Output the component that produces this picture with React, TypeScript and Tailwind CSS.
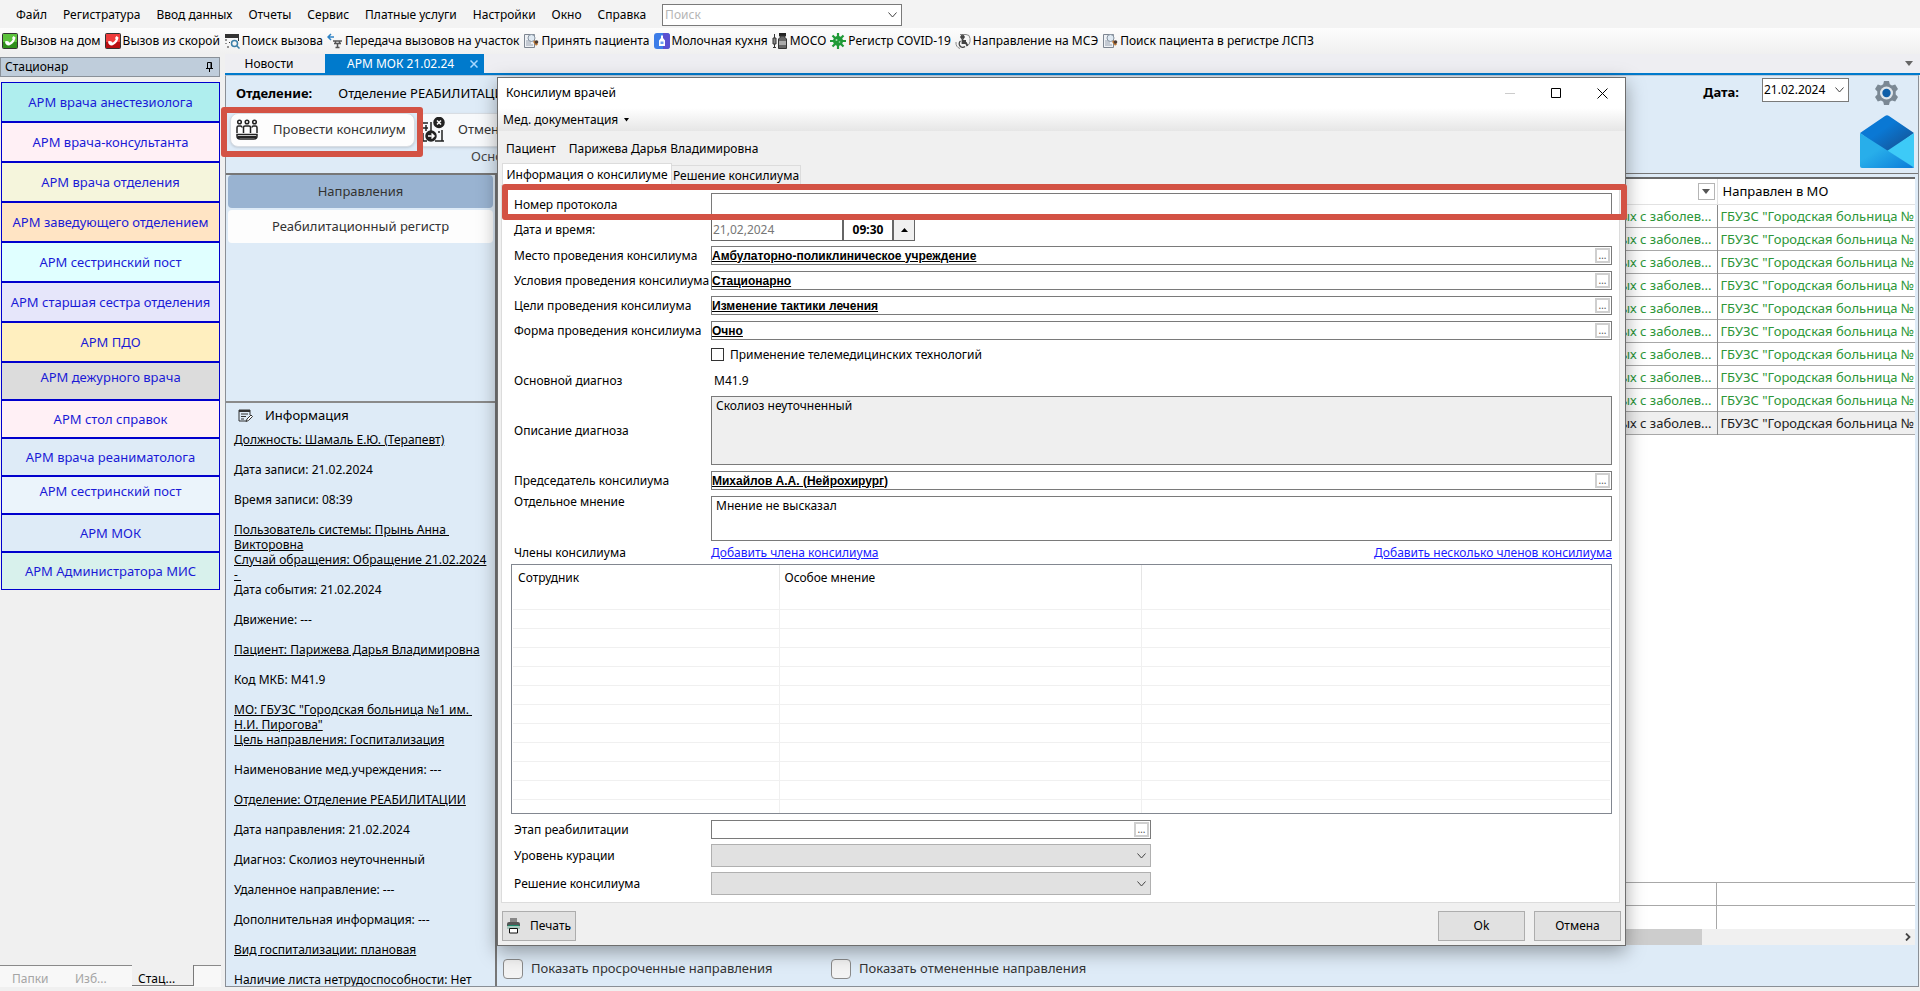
import {ReactNode, useState} from "react";

const menuItems = ["Файл", "Регистратура", "Ввод данных", "Отчеты", "Сервис", "Платные услуги", "Настройки", "Окно", "Справка"];

const PhoneIcon = ({top, bottom}: {top: string; bottom: string}) => (
    <svg width="16" height="16" viewBox="0 0 16 16" className="shrink-0">
        <rect x="0.5" y="0.5" width="15" height="15" rx="1" fill={top} stroke="#333"/>
        <path d="M1 9h14v6H1z" fill={bottom}/>
        <path d="M3 8.500c0 2.500 2 4 3.500 4 3.500-.5 6.500-4 7-8L11.500 3 10 5l.8 1.200C10 7.800 9 8.900 7.500 9.500L6.200 8.300 4.300 8z" fill="#fff"/>
    </svg>
);

const SearchCallIcon = () => (
    <svg width="16" height="16" viewBox="0 0 16 16" fill="none" stroke="#333" className="shrink-0">
        <path d="M1 2h14M1 4h14" strokeWidth="2"/>
        <path d="M2 6v2M2 10v1M5 9l1 1M3 14h2M14.500 5v3"/>
        <circle cx="10.500" cy="10.500" r="3" stroke="#3b7fa8" strokeWidth="1.500"/>
        <path d="M13 13l2.500 2.500" stroke="#3b7fa8" strokeWidth="1.500"/>
    </svg>
);

const TransferIcon = () => (
    <svg width="16" height="16" viewBox="0 0 16 16" fill="none" className="shrink-0">
        <path d="M1 4h6M4 1L1 4l3 3" stroke="#2f83c5" strokeWidth="1.500"/>
        <path d="M6 8h9M7 10.500h7M8.500 8v3M12.500 8v3M10.500 11v3.500M8.500 14.500h4" stroke="#555" strokeWidth="1.500"/>
    </svg>
);

const PatientIcon = () => (
    <svg width="16" height="16" viewBox="0 0 16 16" fill="none" className="shrink-0">
        <path d="M1.500 1.500h10v13h-10z" fill="#eef1f5" stroke="#7d8590"/>
        <path d="M3 8h5M3 10h5M3 12h7" stroke="#9aa3b0"/>
        <circle cx="8.500" cy="5" r="3.500" fill="#dfe9f2" stroke="#8793a0"/>
        <path d="M11 8l3 4" stroke="#c0762c" strokeWidth="2.500"/>
        <circle cx="13.500" cy="9" r="1.800" fill="#4a3b35"/>
    </svg>
);

const MilkIcon = () => (
    <svg width="16" height="16" viewBox="0 0 16 16" className="shrink-0">
        <rect width="16" height="16" rx="3" fill="#3d7de8"/>
        <path d="M9 0h4a3 3 0 013 3v10a3 3 0 01-3 3H9z" fill="#5a50d0"/>
        <path d="M7 2.500h2V5l2 2.500V13H5V7.500L7 5z" fill="#fff"/>
        <path d="M6.500 8.500h3v2.500h-3z" fill="#6f9cf0"/>
    </svg>
);

const VaccineIcon = () => (
    <svg width="16" height="16" viewBox="0 0 16 16" className="shrink-0">
        <path d="M2.500 1v4M1 5h3v6H1zM2.500 11v4M1 14.500h3" fill="#888" stroke="#333"/>
        <path d="M7 0h7v3H7z" fill="#222"/>
        <path d="M8 3h5v1.500l1.500 1.500v9.500h-8V6L8 4.500z" fill="#666" stroke="#333"/>
        <path d="M7 8h7v4H7z" fill="#aaa"/>
    </svg>
);

const VirusIcon = () => (
    <svg width="16" height="16" viewBox="0 0 16 16" className="shrink-0">
        <path d="M8 0v16M0 8h16M2.500 2.500l11 11M13.500 2.500l-11 11" stroke="#1f9a37" strokeWidth="2.200"/>
        <circle cx="8" cy="8" r="5" fill="#1f9a37"/>
        <circle cx="6.500" cy="7" r="1" fill="#a8dfb2"/>
        <circle cx="9.500" cy="9" r="0.800" fill="#a8dfb2"/>
    </svg>
);

const WheelchairIcon = () => (
    <svg width="16" height="16" viewBox="0 0 16 16" fill="none" stroke="#444" className="shrink-0">
        <path d="M5 1.500h6q4 0 4 4v3q0 3.500-3.500 4" stroke="#888"/>
        <circle cx="7.500" cy="4" r="1.800" fill="#444"/>
        <path d="M7.500 6v4h3.500l1.500 3M8 8h3" strokeWidth="1.800"/>
        <path d="M5.500 8a3.500 3.500 0 104.500 5.500" strokeWidth="1.300"/>
        <path d="M1 9q-.5 5 4 6.500" stroke="#888"/>
    </svg>
);

const toolbarItems: {icon: ReactNode; label: string}[] = [
    {icon: <PhoneIcon top="#5cc23c" bottom="#2f8f1c"/>, label: "Вызов на дом"},
    {icon: <PhoneIcon top="#ee3b3b" bottom="#b90f12"/>, label: "Вызов из скорой"},
    {icon: <SearchCallIcon/>, label: "Поиск вызова"},
    {icon: <TransferIcon/>, label: "Передача вызовов на участок"},
    {icon: <PatientIcon/>, label: "Принять пациента"},
    {icon: <MilkIcon/>, label: "Молочная кухня"},
    {icon: <VaccineIcon/>, label: "МОСО"},
    {icon: <VirusIcon/>, label: "Регистр COVID-19"},
    {icon: <WheelchairIcon/>, label: "Направление на МСЭ"},
    {icon: <PatientIcon/>, label: "Поиск пациента в регистре ЛСПЗ"},
];

const workplaces = [
    {label: "АРМ врача анестезиолога", style: "h-10 bg-[#afeeee]"},
    {label: "АРМ врача-консультанта", style: "h-10 bg-[#fff0f5]"},
    {label: "АРМ врача отделения", style: "h-10 bg-[#f5f5dc]"},
    {label: "АРМ заведующего отделением", style: "h-10 bg-[#ffe4c4]"},
    {label: "АРМ сестринский пост", style: "h-10 bg-[#e0ffff]"},
    {label: "АРМ старшая сестра отделения", style: "h-10 bg-[#e6e6fa]"},
    {label: "АРМ ПДО", style: "h-10 bg-[#ffefbf]"},
    {label: "АРМ дежурного врача", style: "h-[38px] pb-2 bg-[#dcdcdc]"},
    {label: "АРМ стол справок", style: "h-[38px] bg-[#fff0f5]"},
    {label: "АРМ врача реаниматолога", style: "h-[38px] bg-[#deebf7]"},
    {label: "АРМ сестринский пост", style: "h-[38px] pb-2 bg-[#ebf4fb]"},
    {label: "АРМ МОК", style: "h-[38px] bg-[#deebf7]"},
    {label: "АРМ Администратора МИС", style: "h-[38px] bg-[#d8f1ec]"},
];

const infoRows = [
    {text: "Должность: Шамаль Е.Ю. (Терапевт)", link: true},
    {text: "Дата записи: 21.02.2024"},
    {text: "Время записи: 08:39"},
    {text: "Пользователь системы: Прынь Анна \nВикторовна", link: true},
    {text: "Случай обращения: Обращение 21.02.2024\n- ", link: true},
    {text: "Дата события: 21.02.2024"},
    {text: "Движение: ---"},
    {text: "Пациент: Парижева Дарья Владимировна", link: true},
    {text: "Код МКБ: M41.9"},
    {text: "МО: ГБУЗС \"Городская больница №1 им. \nН.И. Пирогова\"", link: true},
    {text: "Цель направления: Госпитализация", link: true},
    {text: "Наименование мед.учреждения: ---"},
    {text: "Отделение: Отделение РЕАБИЛИТАЦИИ", link: true},
    {text: "Дата направления: 21.02.2024"},
    {text: "Диагноз: Сколиоз неуточненный"},
    {text: "Удаленное направление: ---"},
    {text: "Дополнительная информация: ---"},
    {text: "Вид госпитализации: плановая", link: true},
    {text: "Наличие листа нетрудоспособности: Нет"},
];

const Chevron = () => (
    <svg width="9" height="6" viewBox="0 0 9 6" fill="none" stroke="#444" className="pointer-events-none absolute right-1 top-1/2 -translate-y-1/2">
        <path d="M0.500 0.500l4 4.500 4-4.500"/>
    </svg>
);

const Row = ({label, id, children}: {label: string; id: string; children: ReactNode}) => (
    <div className="flex items-center">
        <label htmlFor={id} className="w-[200px] shrink-0 whitespace-nowrap pl-[3px]">{label}</label>
        {children}
    </div>
);

const Lookup = ({id, value}: {id: string; value: string}) => (
    <div className="flex h-[19px] min-w-0 flex-1 items-center gap-[2px] border border-[#7a7a7a] bg-white pr-px">
        <input id={id} readOnly value={value} className="h-full min-w-0 flex-1 font-['Liberation_Sans',sans-serif] text-xs font-bold underline outline-none"/>
        <button aria-label="Выбрать" className="flex h-[15px] w-[15px] items-center justify-center border-2 border-[#cfcfcf] bg-white text-[10px] leading-[11px] text-[#555]">…</button>
    </div>
);

const MenuBar = () => (
    <nav className="flex h-7 items-center bg-[#f3f3f3] pl-4">
        {menuItems.map((item) => (
            <button key={item} className="mr-4 whitespace-nowrap pt-px">{item}</button>
        ))}
        <div className="relative mt-[2px] h-[22px] w-60 border border-[#7a7a7a] bg-white">
            <select aria-label="Поиск" className="h-full w-full appearance-none px-[2px] text-[#b5b5b5] outline-none">
                <option>Поиск</option>
            </select>
            <Chevron/>
        </div>
    </nav>
);

const ToolBar = () => (
    <div className="flex h-[26px] items-center gap-1 bg-gradient-to-b from-[#fdfdfd] to-[#f0f0f0] pl-[2px]">
        {toolbarItems.map(({icon, label}) => (
            <button key={label} className="flex items-center gap-[2px] whitespace-nowrap">{icon}{label}</button>
        ))}
    </div>
);

const SideBar = () => (
    <aside className="flex w-[221px] shrink-0 flex-col pt-[3px]">
        <div className="flex h-5 w-[220px] items-center justify-between border border-[#8a9199] bg-[#bfcddb] pl-1 pr-[6px]">
            <span>Стационар</span>
            <svg width="7" height="10" viewBox="0 0 7 10" fill="none" stroke="#000">
                <path d="M1.500 6V0.500h4V6M0 6.500h7M3.500 7v3"/>
                <path d="M5 1v5" strokeWidth="1"/>
            </svg>
        </div>
        <div className="mt-[5px] flex w-[220px] flex-col pl-px text-[13px]">
            {workplaces.map(({label, style}, index) => (
                <button key={index} className={`flex items-center justify-center whitespace-nowrap border border-[#0000cd] pt-[2px] text-[#1a1ad6] ${style}`}>{label}</button>
            ))}
        </div>
        <div className="mt-auto flex h-[22px] bg-[#f8f8f8] text-[#a5a5a5]">
            <button className="w-[66px] border-t border-[#8a8a8a] pl-3 pt-1 text-left">Папки</button>
            <button className="w-[66px] border-t border-[#8a8a8a] pl-[9px] pt-1 text-left">Изб...</button>
            <button className="h-[21px] w-[62px] border-b border-r border-[#7a7a7a] bg-[#f0f0f0] pl-[6px] pt-[6px] text-left text-black">Стац...</button>
            <div className="flex-1 border-t border-[#8a8a8a]"/>
        </div>
    </aside>
);

const Header = () => (
    <div className="flex h-[97px] shrink-0 text-[13px]">
        <div className="flex min-w-0 flex-1 flex-col">
            <div className="flex h-9 items-center gap-[26px] pl-[10px]">
                <span className="font-bold">Отделение:</span>
                <span>Отделение РЕАБИЛИТАЦИИ</span>
            </div>
            <div className="flex h-9 items-center gap-[2px] pl-1 text-[#333]">
                <button className="flex h-[34px] w-[185px] items-center rounded-lg border border-[#d8dde3] bg-[#fdfdfd] pl-[5px] shadow-sm">
                    <svg width="22" height="22" viewBox="0 0 22 22" fill="none" stroke="#222" strokeWidth="1.500">
                        <circle cx="3.500" cy="3" r="1.800"/>
                        <circle cx="11" cy="3" r="1.800"/>
                        <circle cx="18.500" cy="3" r="1.800"/>
                        <path d="M1 14V8.500Q1 7 2.500 7h2Q6 7 6 8.500M7.500 14V8.500Q7.500 7 9 7h4q1.500 0 1.500 1.500V14M16 8.500Q16 7 17.500 7h2Q21 7 21 8.500V14"/>
                        <path d="M1 15.500h20v1.500q0 3-3 3H4q-3 0-3-3z"/>
                        <path d="M2 18h18" strokeWidth="2"/>
                    </svg>
                    <span className="ml-[15px]">Провести консилиум</span>
                </button>
                <button className="flex h-[34px] w-[185px] items-center rounded-lg border border-[#d8dde3] bg-[#f7f9fb] pl-1 shadow-sm">
                    <svg width="24" height="26" viewBox="0 0 24 26" fill="none" stroke="#222" strokeWidth="1.500">
                        <path d="M1 6h5M1 11h5M4 8v6M9 5v9M1 16v8h4M20 13v11h-5M13 24h9M17 14v2"/>
                        <circle cx="17" cy="5.500" r="5" fill="#222"/>
                        <path d="M15 3.500l4 4M19 3.500l-4 4" stroke="#fff"/>
                        <circle cx="9" cy="19" r="5" fill="#222"/>
                        <path d="M6 19h6M9.500 16.500L12 19l-2.500 2.500" stroke="#fff"/>
                    </svg>
                    <span className="ml-3">Отменить</span>
                </button>
            </div>
            <span className="pl-[245px] text-[#444]">Основное</span>
        </div>
        <div className="flex flex-col items-end pr-1 pt-[2px]">
            <div className="flex items-start">
                <label htmlFor="period" className="pt-[6px] pr-[23px] font-bold">Дата:</label>
                <div className="relative h-6 w-[87px] border border-[#7a7a7a] bg-white text-xs">
                    <select id="period" className="h-full w-full appearance-none pl-px outline-none">
                        <option>21.02.2024</option>
                    </select>
                    <Chevron/>
                </div>
                <button aria-label="Настройки" className="ml-[25px] mr-[15px] mt-[3px]">
                    <svg width="25" height="24" viewBox="0 0 24 24">
                        <path d="M9.500 0h5l.8 3.200 2.200 1.200 3.200-1L23.500 8l-2.300 2.500v3l2.300 2.500-2.800 4.500-3.200-1-2.200 1.300-.8 3.200h-5l-.8-3.200-2.200-1.300-3.200 1L.5 16l2.300-2.500v-3L.5 8l2.800-4.600 3.200 1 2.200-1.200z" fill="#7b8894"/>
                        <circle cx="12" cy="12" r="6.500" fill="#dfe6ec"/>
                        <circle cx="12" cy="12" r="4.200" fill="#0f5fa8"/>
                    </svg>
                </button>
            </div>
            <button aria-label="Сообщения" className="mt-[10px]">
                <svg width="54" height="53" viewBox="0 0 54 53">
                    <defs>
                        <linearGradient id="flap" x1="0" y1="0" x2="1" y2="1">
                            <stop offset="0.400" stopColor="#0a78d4"/>
                            <stop offset="1" stopColor="#174a86"/>
                        </linearGradient>
                        <linearGradient id="front" x1="0" y1="0" x2="1" y2="1">
                            <stop offset="0.400" stopColor="#28aeea"/>
                            <stop offset="1" stopColor="#0a7ad8"/>
                        </linearGradient>
                    </defs>
                    <path d="M0 18L25 1q2-1.500 4 0l25 17-27 20z" fill="url(#flap)"/>
                    <path d="M54 18v35L27 36z" fill="#3dcaf7"/>
                    <path d="M0 18l54 34.500L52 53H2q-2 0-2-2z" fill="url(#front)"/>
                </svg>
            </button>
        </div>
    </div>
);

const InfoColumn = () => (
    <div className="flex w-[271px] shrink-0 flex-col border-t-2 border-r-2 border-[#777]">
        <div className="flex h-[226px] shrink-0 flex-col gap-[2px] px-[2px] text-[13px] text-[#333]">
            <button className="h-[33px] rounded bg-[#99b3d1]">Направления</button>
            <button className="h-[33px] rounded bg-[#fdfdfd]">Реабилитационный регистр</button>
        </div>
        <div className="flex h-0 flex-1 flex-col overflow-hidden border-t-2 border-[#8a8a8a] pl-2">
            <div className="flex h-[25px] shrink-0 items-center gap-3 pl-1 text-[13px]">
                <svg width="15" height="14" viewBox="0 0 15 14" fill="none" stroke="#333">
                    <path d="M12 6V1H1v11h7" />
                    <path d="M1 2h11" strokeWidth="2"/>
                    <path d="M3 5h7M3 7.500h5M3 10h3" strokeWidth="1.200"/>
                    <path d="M8 12.500l1-2.500 4-4 1.500 1.500-4 4z" fill="#fff"/>
                </svg>
                <span>Информация</span>
            </div>
            <div className="pt-1 leading-[15px]">
                {infoRows.map(({text, link}) => (
                    <div key={text} className="h-[30px] whitespace-pre">
                        {link ? <a href="#" className="underline">{text}</a> : text}
                    </div>
                ))}
            </div>
        </div>
    </div>
);

const Referrals = () => (
    <div className="flex min-w-0 flex-1 flex-col border-t border-[#777]">
        <div className="mr-[3px] mt-[3px] flex flex-1 flex-col border-t-2 border-[#6a6a6a] bg-white text-[13px]">
            <table className="w-full table-fixed border-collapse">
                <thead>
                    <tr className="h-[25px] border-b border-[#e2e2e2]">
                        <th className="border-r border-[#e2e2e2] px-[2px] text-right">
                            <button aria-label="Фильтр" className="inline-flex h-[17px] w-[17px] items-center justify-center border border-[#b5b5b5] bg-white align-middle">
                                <svg width="8" height="5" viewBox="0 0 8 5"><path d="M0 0h8L4 5z" fill="#555"/></svg>
                            </button>
                        </th>
                        <th className="w-[198px] pl-[5px] text-left font-normal">Направлен в МО</th>
                    </tr>
                </thead>
                <tbody className="text-[#2c9638]">
                    {Array.from({length: 10}).map((_, index) => (
                        <tr key={index} className="h-[23px] border-b border-[#a8a8a8] last:bg-[#efefef] last:text-[#222]">
                            <td className="overflow-hidden whitespace-nowrap border-r border-[#8a8a8a] pr-[5px] text-right leading-5">Лечение больных с заболев...</td>
                            <td className="overflow-hidden whitespace-nowrap pl-[3px] leading-5">ГБУЗС "Городская больница №1 им. Н.И. Пирогова"</td>
                        </tr>
                    ))}
                </tbody>
            </table>
            <div className="mt-auto grid grid-cols-[1fr_198px]">
                <div className="h-[23px] border-t border-r border-[#a8a8a8]"/>
                <div className="border-t border-[#a8a8a8]"/>
                <div className="h-6 border-t border-r border-[#a8a8a8]"/>
                <div className="border-t border-[#a8a8a8]"/>
            </div>
            <div className="flex h-4 items-center justify-between bg-[#f0f0f0]">
                <div className="h-full w-[85%] bg-[#cdcdcd]"/>
                <svg width="6" height="8" viewBox="0 0 6 8" className="mr-1" fill="none" stroke="#444" strokeWidth="1.800"><path d="M1 0.500L4.500 4 1 7.500"/></svg>
            </div>
        </div>
        <div className="flex h-[41px] items-center pl-[6px] pt-[6px] text-[13px] text-[#333]">
            <label className="flex w-[328px] items-center gap-2">
                <input type="checkbox" className="h-5 w-5 appearance-none rounded border border-[#8a8a8a] bg-[#f3f3f3]"/>
                Показать просроченные направления
            </label>
            <label className="flex items-center gap-2">
                <input type="checkbox" className="h-5 w-5 appearance-none rounded border border-[#8a8a8a] bg-[#f3f3f3]"/>
                Показать отмененные направления
            </label>
        </div>
    </div>
);

const CouncilDialog = () => {
    const [opinion, setOpinion] = useState("Мнение не высказал");
    const [protocol, setProtocol] = useState("");

    return (
        <div role="dialog" aria-label="Консилиум врачей" className="absolute bottom-[45px] left-[497px] right-[294px] top-[77px] flex flex-col border border-[#6e6e6e] bg-[#f0f0f0] shadow-[0_6px_18px_rgba(0,0,0,0.35)]">
            <div className="flex h-[30px] shrink-0 items-center justify-between bg-white pl-2 pr-[17px]">
                <span>Консилиум врачей</span>
                <div className="flex items-center gap-9">
                    <button aria-label="Свернуть"><svg width="10" height="10" viewBox="0 0 10 10" stroke="#ccc"><path d="M0 5.500h10"/></svg></button>
                    <button aria-label="Развернуть"><svg width="10" height="10" viewBox="0 0 10 10" fill="none" stroke="#000"><path d="M0.500 0.500h9v9h-9z"/></svg></button>
                    <button aria-label="Закрыть"><svg width="11" height="11" viewBox="0 0 11 11" stroke="#000"><path d="M0.500 0.500l10 10M10.500 0.500l-10 10"/></svg></button>
                </div>
            </div>
            <div className="flex h-[23px] shrink-0 items-center bg-gradient-to-b from-white to-[#e6e6e6] pl-[5px]">
                <button className="flex items-center gap-[6px]">
                    Мед. документация
                    <svg width="5" height="4" viewBox="0 0 5 4"><path d="M0 0h5L2.500 3.500z"/></svg>
                </button>
            </div>
            <div className="flex h-8 shrink-0 items-center gap-[13px] pl-2 pt-[3px]">
                <span>Пациент</span>
                <span>Парижева Дарья Владимировна</span>
            </div>
            <div className="flex shrink-0 items-end pl-1">
                <button className="h-[22px] w-[170px] border-x border-t border-[#dcdcdc] bg-white">Информация о консилиуме</button>
                <button className="h-5 w-[129px] border-r border-t border-[#dcdcdc]">Решение консилиума</button>
            </div>
            <div className="ml-[3px] mr-[5px] flex min-h-0 flex-1 flex-col border border-[#dcdcdc] bg-white pl-[9px] pr-[7px] pt-[7px]">
                <Row id="protocol" label="Номер протокола">
                    <input id="protocol" value={protocol} onChange={e => setProtocol(e.target.value)} className="h-6 min-w-0 flex-1 border border-[#7a7a7a] px-1 outline-none"/>
                </Row>
                <div className="mt-[2px]">
                    <Row id="date" label="Дата и время:">
                        <div className="flex h-[22px] border border-[#666]">
                            <input id="date" readOnly value="21,02,2024" className="w-[130px] px-px text-[#777] outline-none"/>
                            <input aria-label="Время" readOnly value="09:30" className="w-[52px] border-x-2 border-[#666] text-center font-bold outline-none"/>
                            <button aria-label="Увеличить" className="flex w-5 items-center justify-center bg-[#f0f0f0]">
                                <svg width="7" height="4" viewBox="0 0 7 4"><path d="M0 4h7L3.500 0z"/></svg>
                            </button>
                        </div>
                    </Row>
                </div>
                <div className="mt-[5px] flex flex-col gap-[6px]">
                    <Row id="place" label="Место проведения консилиума"><Lookup id="place" value="Амбулаторно-поликлиническое учреждение"/></Row>
                    <Row id="conditions" label="Условия проведения консилиума"><Lookup id="conditions" value="Стационарно"/></Row>
                    <Row id="goals" label="Цели проведения консилиума"><Lookup id="goals" value="Изменение тактики лечения"/></Row>
                    <Row id="form" label="Форма проведения консилиума"><Lookup id="form" value="Очно"/></Row>
                </div>
                <label className="mt-[6px] flex h-[17px] items-center gap-[6px] pl-[200px]">
                    <input type="checkbox" className="h-[13px] w-[13px] appearance-none border border-[#333] bg-white"/>
                    Применение телемедицинских технологий
                </label>
                <div className="mt-[9px] flex h-[18px] items-center">
                    <span className="w-[203px] pl-[3px]">Основной диагноз</span>
                    <span>M41.9</span>
                </div>
                <div className="mt-[6px] flex flex-col gap-[6px]">
                    <Row id="diagnosis" label="Описание диагноза">
                        <textarea id="diagnosis" readOnly value="Сколиоз неуточненный" className="h-[69px] min-w-0 flex-1 resize-none border border-[#7a7a7a] bg-[#efefef] px-1 leading-[18px] outline-none"/>
                    </Row>
                    <Row id="chairman" label="Председатель консилиума"><Lookup id="chairman" value="Михайлов А.А. (Нейрохирург)"/></Row>
                    <div className="flex items-start">
                        <label htmlFor="opinion" className="w-[200px] shrink-0 pl-[3px] leading-[12px]">Отдельное мнение</label>
                        <textarea id="opinion" value={opinion} onChange={e => setOpinion(e.target.value)} className="h-[45px] min-w-0 flex-1 resize-none border border-[#7a7a7a] px-1 leading-[18px] outline-none"/>
                    </div>
                </div>
                <div className="mt-px flex h-[22px] shrink-0 items-center">
                    <span className="w-[200px] pl-[3px]">Члены консилиума</span>
                    <a href="#" className="text-[#1a1aff] underline">Добавить члена консилиума</a>
                    <a href="#" className="ml-auto text-[#1a1aff] underline">Добавить несколько членов консилиума</a>
                </div>
                <div className="h-0 flex-1 overflow-hidden border border-[#828790] px-px">
                    <table className="w-full table-fixed border-collapse">
                        <thead>
                            <tr className="h-[25px] text-left">
                                <th className="w-[266px] border-r border-[#e5e5e5] pl-[5px] font-normal">Сотрудник</th>
                                <th className="w-[362px] border-r border-[#e5e5e5] pl-[5px] font-normal">Особое мнение</th>
                                <th/>
                            </tr>
                        </thead>
                        <tbody>
                            {Array.from({length: 12}).map((_, index) => (
                                <tr key={index} className="h-[19px] border-b border-[#f0f0f0]">
                                    <td className="border-r border-[#f0f0f0]"/>
                                    <td className="border-r border-[#f0f0f0]"/>
                                    <td/>
                                </tr>
                            ))}
                        </tbody>
                    </table>
                </div>
                <div className="mb-[7px] mt-[6px] flex w-[640px] flex-col gap-[5px]">
                    <Row id="stage" label="Этап реабилитации"><Lookup id="stage" value=""/></Row>
                    <Row id="level" label="Уровень курации">
                        <div className="relative h-[23px] flex-1 border border-[#b0b0b0] bg-[#e1e1e1]">
                            <select id="level" className="h-full w-full appearance-none outline-none"/>
                            <Chevron/>
                        </div>
                    </Row>
                    <Row id="decision" label="Решение консилиума">
                        <div className="relative h-[23px] flex-1 border border-[#b0b0b0] bg-[#e1e1e1]">
                            <select id="decision" className="h-full w-full appearance-none outline-none"/>
                            <Chevron/>
                        </div>
                    </Row>
                </div>
            </div>
            <div className="flex shrink-0 items-center gap-[9px] pb-1 pl-1 pr-1 pt-2">
                <button className="mr-auto flex h-[30px] w-[74px] items-center gap-[9px] border border-[#adadad] bg-[#e1e1e1] pl-[3px]">
                    <svg width="15" height="16" viewBox="0 0 15 16">
                        <path d="M4 0h7v5H4z" fill="#888"/>
                        <path d="M1 6q0-2 2-2h9q2 0 2 2v5H1z" fill="#555"/>
                        <path d="M1 8h13v3H1z" fill="#a8c8bd"/>
                        <path d="M2 7.500h11" stroke="#1c8a6c"/>
                        <path d="M3.500 10.500h8v4.500h-8z" fill="#fff" stroke="#111"/>
                    </svg>
                    Печать
                </button>
                <button className="h-[30px] w-[87px] border border-[#adadad] bg-[#e1e1e1]">Ok</button>
                <button className="h-[30px] w-[87px] border border-[#adadad] bg-[#e1e1e1]">Отмена</button>
            </div>
            {/* red marker round the protocol number */}
            <div className="pointer-events-none absolute -right-[2px] left-1 top-[106px] h-9 rounded-[3px] border-[6px] border-[#d35244]"/>
        </div>
    );
};

const App = () => {
    return (
        <div className="relative flex h-screen flex-col overflow-hidden bg-[#f0f0f0] pb-1 font-['Noto_Sans',sans-serif] text-xs text-black">
            <MenuBar/>
            <ToolBar/>
            <div className="flex min-h-0 flex-1">
                <SideBar/>
                <main className="ml-1 flex min-w-0 flex-1 flex-col">
                    <div className="flex h-[21px] shrink-0 items-center border-b-2 border-[#007acc] bg-[#eeeef2]">
                        <button className="w-[100px] pr-3">Новости</button>
                        <button className="flex h-full w-[159px] items-center justify-between bg-[#007acc] pl-[22px] pr-[6px] text-white">
                            АРМ МОК 21.02.24
                            <svg width="8" height="8" viewBox="0 0 8 8" stroke="#a8d8ff" strokeWidth="1.500"><path d="M0.500 0.500l7 7M7.500 0.500l-7 7"/></svg>
                        </button>
                        <svg width="8" height="5" viewBox="0 0 8 5" className="ml-auto mr-[7px]"><path d="M0 0h8L4 5z" fill="#666"/></svg>
                    </div>
                    <div className="mr-px flex min-h-0 flex-1 flex-col border border-[#8a8f96] border-t-[#b8c8d8] bg-[#deebf7]">
                        <Header/>
                        <div className="flex min-h-0 flex-1">
                            <InfoColumn/>
                            <Referrals/>
                        </div>
                    </div>
                </main>
            </div>
            <div className="pointer-events-none absolute left-[221px] top-[107px] h-[50px] w-[202px] rounded-[3px] border-[6px] border-[#d35244]"/>
            <CouncilDialog/>
        </div>
    );
};

export default App;
